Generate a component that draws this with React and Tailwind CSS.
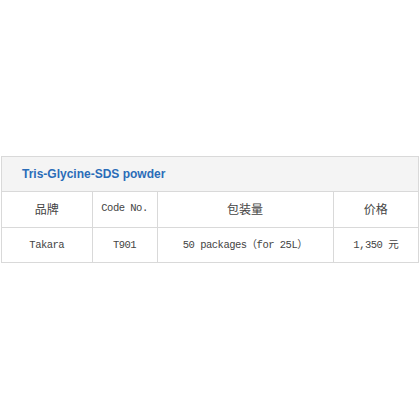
export default function App() {
  const mono = { fontFamily: '"Liberation Mono", "Noto Sans CJK SC", monospace' };
  const cjk = { fontFamily: '"Noto Sans CJK SC", sans-serif' };
  return (
    <div className="w-[420px] h-[420px] bg-white pt-[156px] pl-px">
      <div className="w-[418px] border border-[#d9d9d9]">
        <div className="h-[35px] bg-[#f4f4f4] border-b border-[#d9d9d9] flex items-center pl-[20px]">
          <span className="text-[12px] font-bold text-[#2a6cb8]" style={{ fontFamily: '"Liberation Sans", Arial, sans-serif' }}>
            Tris-Glycine-SDS powder
          </span>
        </div>
        <table className="w-full border-collapse table-fixed text-[#444]">
          <colgroup>
            <col className="w-[90px]" />
            <col className="w-[65px]" />
            <col className="w-[176px]" />
            <col />
          </colgroup>
          <tbody>
            <tr className="h-[35px]">
              <td className="text-center border-r border-b border-[#d9d9d9] text-[12px]" style={cjk}>品牌</td>
              <td className="text-center border-r border-b border-[#d9d9d9] text-[10.5px] tracking-[-0.5px]" style={mono}>Code No.</td>
              <td className="text-center border-r border-b border-[#d9d9d9] text-[12px]" style={cjk}>包装量</td>
              <td className="text-center border-b border-[#d9d9d9] text-[12px]" style={cjk}>价格</td>
            </tr>
            <tr className="h-[35px]">
              <td className="text-center border-r border-[#d9d9d9] text-[10.5px] tracking-[-0.5px] pt-[2px]" style={mono}>Takara</td>
              <td className="text-center border-r border-[#d9d9d9] text-[10.5px] tracking-[-0.5px] pt-[2px]" style={mono}>T901</td>
              <td className="text-center border-r border-[#d9d9d9] text-[10.5px] tracking-[-0.5px] pt-[2px]" style={mono}>50 packages（for 25L）</td>
              <td className="text-center text-[10.5px] tracking-[-0.5px] pt-[2px]" style={mono}>1,350 元</td>
            </tr>
          </tbody>
        </table>
      </div>
    </div>
  );
}
